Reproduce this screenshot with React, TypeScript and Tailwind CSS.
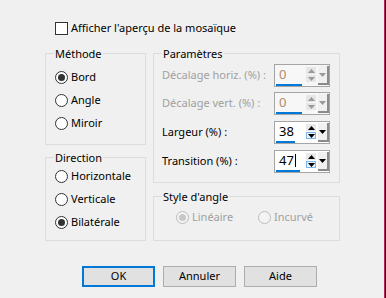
import React from "react";

function Radio({ checked, disabled }: { checked?: boolean; disabled?: boolean }) {
  return (
    <span
      className={`flex h-[13px] w-[13px] shrink-0 items-center justify-center rounded-full border ${
        disabled ? "border-[#bcbcbc] bg-[#f4f4f4]" : "border-[#333333] bg-white"
      }`}
    >
      {checked && (
        <span className={`h-[7px] w-[7px] rounded-full ${disabled ? "bg-[#c8c8c8]" : "bg-[#333333]"}`} />
      )}
    </span>
  );
}

function RadioRow({ label, checked, disabled }: { label: string; checked?: boolean; disabled?: boolean }) {
  return (
    <div className="flex h-[23px] items-center gap-[3px]">
      <Radio checked={checked} disabled={disabled} />
      <span className={disabled ? "text-[#a0a0a0]" : "text-black"}>{label}</span>
    </div>
  );
}

function Group({ title, className, children }: { title: string; className: string; children: React.ReactNode }) {
  return (
    <div className={`relative border border-[#dcdcdc] ${className}`}>
      <span className="absolute left-[8px] top-[-8px] bg-[#f0f0f0] px-[1px] leading-[16px] text-black">{title}</span>
      {children}
    </div>
  );
}

function Tri({ up, muted }: { up?: boolean; muted?: boolean }) {
  return (
    <svg width="7" height="4" viewBox="0 0 7 4">
      <path d={up ? "M0 4 L3.5 0 L7 4 Z" : "M0 0 L7 0 L3.5 4 Z"} fill={muted ? "#9a9a9a" : "#000000"} />
    </svg>
  );
}

function Spin({ value, bar, disabled, cursor }: { value: string; bar: number; disabled?: boolean; cursor?: boolean }) {
  return (
    <div className={`flex h-[23px] w-[56px] shrink-0 border border-[#a5a5a5] ${disabled ? "bg-[#f7f7f7]" : "bg-white"}`}>
      <div className="flex w-[31px] flex-col pl-[1px] pt-[1px]">
        <div className="flex h-[17px] items-center pl-[3px] text-[13px]">
          <span className={disabled ? "text-[#b08a6a]" : "text-black"}>{value}</span>
          {cursor && <span className="ml-[1px] h-[13px] w-[1px] bg-black" />}
        </div>
        <div className="mt-[1px] h-[3px] bg-[#0078d7]" style={{ width: bar }} />
      </div>
      <div className="flex flex-col gap-[1px] pt-[2px]">
        <div className={`flex h-[7px] w-[10px] items-center justify-center ${disabled ? "bg-[#e6e6e6]" : "bg-[#e8e8e8]"}`}>
          <Tri up muted={disabled} />
        </div>
        <div
          className={`flex h-[7px] w-[10px] items-center justify-center border ${
            disabled ? "border-transparent bg-[#e6e6e6]" : "border-[#7eb4ea] bg-[#e5f1fb]"
          }`}
        >
          <Tri muted={disabled} />
        </div>
      </div>
      <div className="ml-[2px] mt-[1px] flex h-[19px] w-[11px] items-center justify-center border-b-2 border-r-2 border-b-[#8a8a8a] border-r-[#8a8a8a] bg-[#f0f0f0]">
        <Tri muted={disabled} />
      </div>
    </div>
  );
}

const params = [
  { label: "Décalage horiz. (%) :", value: "0", bar: 26, disabled: true, mt: "mt-0" },
  { label: "Décalage vert. (%) :", value: "0", bar: 26, disabled: true, mt: "mt-[5px]" },
  { label: "Largeur (%) :", value: "38", bar: 19, disabled: false, mt: "mt-[6px]" },
  { label: "Transition (%) :", value: "47", bar: 24, disabled: false, mt: "mt-[6px]", cursor: true },
];

export default function App() {
  return (
    <div className="flex h-[298px] w-[386px] bg-[#f0f0f0] font-['Noto_Sans',sans-serif] text-[11px] text-black">
      <div className="flex-1 pl-[45px] pt-[22px]">
        <div className="flex h-[13px] items-center gap-[3px] pl-[10px]">
          <span className="h-[13px] w-[13px] border border-[#333333] bg-white" />
          <span className="whitespace-nowrap">Afficher l'aperçu de la mosaïque</span>
        </div>

        <div className="mt-[18px] flex gap-[7px]">
          <div className="flex w-[101px] flex-col">
            <Group title="Méthode" className="h-[92px] pl-[9px] pt-[12px]">
              <RadioRow label="Bord" checked />
              <RadioRow label="Angle" />
              <RadioRow label="Miroir" />
            </Group>
            <Group title="Direction" className="mt-[12px] h-[84px] pl-[9px] pt-[7px]">
              <RadioRow label="Horizontale" />
              <RadioRow label="Verticale" />
              <RadioRow label="Bilatérale" checked />
            </Group>
          </div>

          <div className="flex w-[187px] flex-col">
            <Group title="Paramètres" className="h-[130px] pl-[8px] pr-[9px] pt-[10px]">
              {params.map((p) => (
                <div key={p.label} className={`flex h-[23px] items-center justify-between ${p.mt}`}>
                  <span className={`whitespace-nowrap ${p.disabled ? "text-[#a0a0a0]" : "text-black"}`}>{p.label}</span>
                  <Spin value={p.value} bar={p.bar} disabled={p.disabled} cursor={p.cursor} />
                </div>
              ))}
            </Group>
            <Group title="Style d'angle" className="mt-[13px] h-[45px] pt-[9px]">
              <div className="flex">
                <div className="w-[104px] pl-[22px]">
                  <RadioRow label="Linéaire" checked disabled />
                </div>
                <RadioRow label="Incurvé" disabled />
              </div>
            </Group>
          </div>
        </div>

        <div className="mt-[25px] flex gap-[8px] pl-[37px]">
          <button className="flex h-[21px] w-[73px] items-center justify-center border-2 border-[#0078d7] bg-[#e1e1e1]">
            OK
          </button>
          <button className="flex h-[21px] w-[73px] items-center justify-center border border-[#adadad] bg-[#e1e1e1]">
            Annuler
          </button>
          <button className="flex h-[21px] w-[73px] items-center justify-center border border-[#adadad] bg-[#e1e1e1]">
            Aide
          </button>
        </div>
      </div>
      <div className="w-[1px] bg-[#b4245e]" />
      <div className="w-[1px] bg-[#2e0a1c]" />
    </div>
  );
}
